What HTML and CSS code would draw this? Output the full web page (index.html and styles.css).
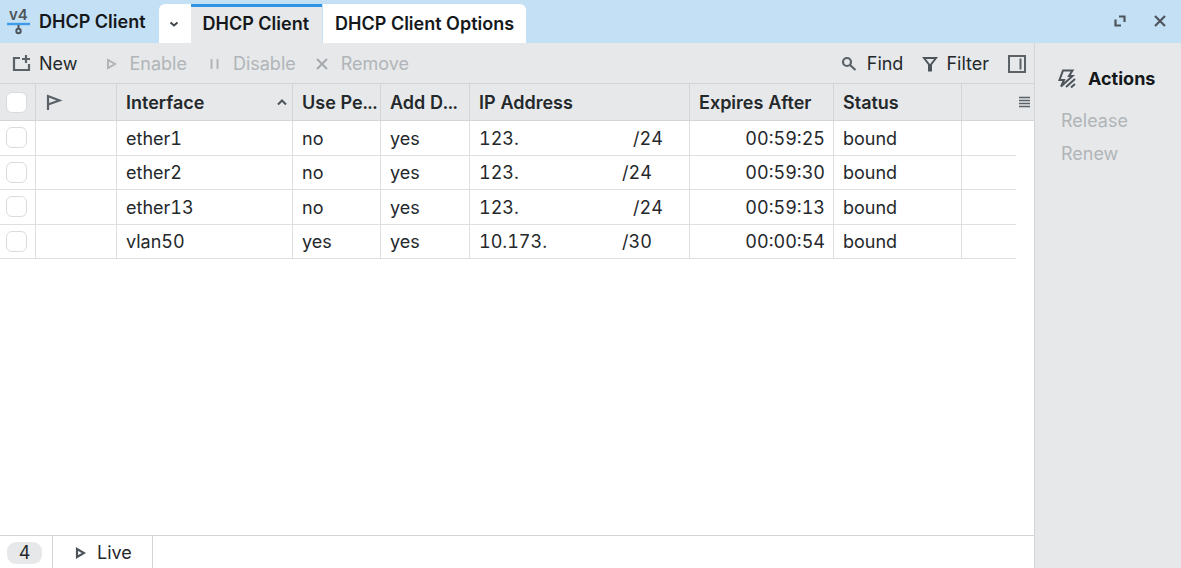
FILE: index.html
```html
<!DOCTYPE html>
<html lang="en">
<head>
    <meta charset="UTF-8">
    <meta name="viewport" content="width=device-width, initial-scale=1.0">
    <title>DHCP Client</title>
    <link rel="stylesheet" href="styles.css">
</head>
<body>
    <!-- Title bar -->
    <header class="titlebar">
        <svg class="logo" width="24" height="34" viewBox="0 0 24 34" fill="none">
            <text x="2" y="15" class="logo-text">v4</text>
            <path d="M0 19h23" stroke="#3d9be9" stroke-width="2.4"/>
            <path d="M11.500 20v4" stroke="#4d555c" stroke-width="2"/>
            <circle cx="11.500" cy="26" r="2.200" stroke="#4d555c" stroke-width="2"/>
        </svg>
        <h1 class="title">DHCP Client</h1>
        <nav class="tabs">
            <button class="tab tab-menu" aria-label="Tabs">
                <svg width="12" height="12" viewBox="0 0 12 12" fill="none" stroke="#3f464c" stroke-width="2"><path d="M2.500 4.500L6 7.500l3.500-3"/></svg>
            </button>
            <button class="tab active">DHCP Client</button>
            <button class="tab">DHCP Client Options</button>
        </nav>
        <div class="window-buttons">
            <button class="icon-button" aria-label="Maximize">
                <svg width="14" height="14" viewBox="0 0 14 14" fill="none" stroke="#4d555c" stroke-width="2.200"><path d="M6 2.500h5.500V8M2.500 5.500v6H8"/></svg>
            </button>
            <button class="icon-button" aria-label="Close">
                <svg width="14" height="14" viewBox="0 0 14 14" fill="none" stroke="#4d555c" stroke-width="2.200"><path d="M2 2l10 10M12 2L2 12"/></svg>
            </button>
        </div>
    </header>

    <div class="content">
        <main class="main">
            <!-- Toolbar -->
            <div class="toolbar">
                <button class="tool">
                    <svg width="20" height="20" viewBox="0 0 20 20" fill="none" stroke="#5a6268" stroke-width="2.200"><path d="M9 4H3v12h15v-6M15 1v8M11 5h8"/></svg>
                    New
                </button>
                <button class="tool tool-enable" disabled>
                    <svg width="12" height="14" viewBox="0 0 12 14" fill="none" stroke="#b1b5b8" stroke-width="2"><path d="M3 3v8l7-4z"/></svg>
                    Enable
                </button>
                <button class="tool tool-disable" disabled>
                    <svg width="12" height="14" viewBox="0 0 12 14" fill="none" stroke="#b1b5b8" stroke-width="2"><path d="M2.500 2v10M8.500 2v10"/></svg>
                    Disable
                </button>
                <button class="tool tool-remove" disabled>
                    <svg width="14" height="14" viewBox="0 0 14 14" fill="none" stroke="#a4a9ad" stroke-width="2"><path d="M2 2l10 10M12 2L2 12"/></svg>
                    Remove
                </button>
                <div class="tools-right">
                    <button class="tool tool-find">
                        <svg width="16" height="16" viewBox="0 0 16 16" fill="none" stroke="#5a6268" stroke-width="2.200"><circle cx="6" cy="6" r="4"/><path d="M9 9l5.500 5"/></svg>
                        Find
                    </button>
                    <button class="tool">
                        <svg width="16" height="16" viewBox="0 0 16 16" fill="none" stroke="#4d555c" stroke-width="2"><path d="M2 2h12L9 8.500v6H7v-6z"/></svg>
                        Filter
                    </button>
                    <button class="tool" aria-label="Toggle panel">
                        <svg width="18" height="18" viewBox="0 0 18 18" fill="none" stroke="#5a6268" stroke-width="2"><path d="M1 1h16v16H1z"/><path d="M12.500 3.500v11"/></svg>
                    </button>
                </div>
            </div>

            <!-- Clients table -->
            <table class="grid">
                <colgroup>
                    <col class="col-check">
                    <col class="col-flag">
                    <col class="col-interface">
                    <col class="col-option">
                    <col class="col-add">
                    <col class="col-address">
                    <col class="col-expires">
                    <col class="col-status">
                    <col>
                    <col class="col-scroll">
                </colgroup>
                <thead>
                    <tr>
                        <th class="check"><input type="checkbox" aria-label="Select all"></th>
                        <th>
                            <svg class="flag" width="18" height="18" viewBox="0 0 18 18" fill="none" stroke="#5a6268" stroke-width="2.200"><path d="M3 16V2l11.500 4.500L3 10.500"/></svg>
                        </th>
                        <th>
                            <div class="sorted">Interface
                                <svg width="12" height="12" viewBox="0 0 12 12" fill="none" stroke="#4d555c" stroke-width="2"><path d="M2 7.500L6 3.500l4 4"/></svg>
                            </div>
                        </th>
                        <th>Use Pe...</th>
                        <th>Add D...</th>
                        <th>IP Address</th>
                        <th>Expires After</th>
                        <th>Status</th>
                        <th class="menu-cell" colspan="2">
                            <button class="icon-button" aria-label="Columns">
                                <svg width="12" height="12" viewBox="0 0 12 12" stroke="#5a6268" stroke-width="1.400"><path d="M0 1.500h11M0 4.500h11M0 7.500h11M0 10.500h11"/></svg>
                            </button>
                        </th>
                    </tr>
                </thead>
                <tbody>
                    <tr>
                        <td class="check"><input type="checkbox" aria-label="ether1"></td>
                        <td></td>
                        <td>ether1</td>
                        <td>no</td>
                        <td>yes</td>
                        <td><span class="ip ip-long">123.</span>/24</td>
                        <td class="time">00:59:25</td>
                        <td>bound</td>
                        <td></td>
                    </tr>
                    <tr>
                        <td class="check"><input type="checkbox" aria-label="ether2"></td>
                        <td></td>
                        <td>ether2</td>
                        <td>no</td>
                        <td>yes</td>
                        <td><span class="ip">123.</span>/24</td>
                        <td class="time">00:59:30</td>
                        <td>bound</td>
                        <td></td>
                    </tr>
                    <tr>
                        <td class="check"><input type="checkbox" aria-label="ether13"></td>
                        <td></td>
                        <td>ether13</td>
                        <td>no</td>
                        <td>yes</td>
                        <td><span class="ip ip-long">123.</span>/24</td>
                        <td class="time">00:59:13</td>
                        <td>bound</td>
                        <td></td>
                    </tr>
                    <tr>
                        <td class="check"><input type="checkbox" aria-label="vlan50"></td>
                        <td></td>
                        <td>vlan50</td>
                        <td>yes</td>
                        <td>yes</td>
                        <td><span class="ip">10.173.</span>/30</td>
                        <td class="time">00:00:54</td>
                        <td>bound</td>
                        <td></td>
                    </tr>
                </tbody>
            </table>

            <!-- Status bar -->
            <footer class="statusbar">
                <div class="status-cell"><span class="count">4</span></div>
                <button class="status-cell live">
                    <svg width="12" height="14" viewBox="0 0 12 14" fill="none" stroke="#4d555c" stroke-width="2.200"><path d="M3 3v8l7-4z"/></svg>
                    Live
                </button>
            </footer>
        </main>

        <!-- Actions panel -->
        <aside class="actions">
            <h2 class="actions-title">
                <svg width="20" height="20" viewBox="0 0 20 20" fill="none" stroke="#4d555c" stroke-width="2"><path d="M6 1.500h9.500L12 7h3.500L4 17.500 7 11H2.500z"/><path d="M18 10l-9 8M18 15l-4 3.500"/></svg>
                Actions
            </h2>
            <button class="action" disabled>Release</button>
            <button class="action" disabled>Renew</button>
        </aside>
    </div>
</body>
</html>
```

FILE: styles.css
```css
* {
    box-sizing: border-box;
}

body {
    margin: 0;
    height: 100vh;
    display: flex;
    flex-direction: column;
    font-family: Inter, sans-serif;
    font-size: 18px;
    line-height: 24px;
    color: #24282b;
    background: #ffffff;
}

button {
    padding: 0;
    border: none;
    background: none;
    font: inherit;
    color: inherit;
}

svg {
    display: block;
    flex-shrink: 0;
}

/* Title bar */
.titlebar {
    display: flex;
    align-items: center;
    height: 43px;
    padding-left: 7px;
    background: #c4e0f4;
}

.logo-text {
    font-size: 15px;
    font-weight: 600;
    fill: #4d555c;
}

.title {
    margin: 0 13px 0 8px;
    font-size: 18px;
    font-weight: 600;
    color: #14181b;
}

.tabs {
    display: flex;
    align-self: flex-end;
    height: 39px;
}

.tab {
    padding: 0 12px;
    background: #ffffff;
    font-weight: 600;
    color: #14181b;
}

.tab:last-child {
    margin-left: 1px;
    border-top-right-radius: 6px;
}

.tab-menu {
    width: 32px;
    padding: 0 9px;
    border-top-left-radius: 6px;
}

.tab.active {
    border-top: 3px solid #2e94e6;
    padding: 0 13px 3px 12px;
    background: #e6e8ea;
}

.window-buttons {
    display: flex;
    gap: 26px;
    margin-left: auto;
    padding: 0 14px 2px 0;
}

.content {
    flex: 1;
    display: flex;
    min-height: 0;
}

.main {
    flex: 1;
    display: flex;
    flex-direction: column;
    min-width: 0;
}

/* Toolbar */
.toolbar {
    display: flex;
    align-items: center;
    height: 40px;
    padding: 2px 8px 0 11px;
    background: #e6e8ea;
}

.tool {
    display: flex;
    align-items: center;
    gap: 8px;
}

.tool:disabled {
    color: #b1b5b8;
}

.tool-enable {
    gap: 12px;
    margin-left: 28px;
}

.tool-disable {
    gap: 12px;
    margin-left: 22px;
}

.tool-remove {
    gap: 12px;
    margin-left: 19px;
}

.tool-find {
    gap: 10px;
}

.tools-right {
    display: flex;
    gap: 19px;
    margin-left: auto;
}

/* Table */
.grid {
    width: 100%;
    table-layout: fixed;
    border-collapse: separate;
    border-spacing: 0;
    font-variant-numeric: tabular-nums;
}

.grid tbody {
    height: 138px;
}

.col-check {
    width: 36px;
}

.col-flag {
    width: 81px;
}

.col-interface {
    width: 176px;
}

.col-option {
    width: 88px;
}

.col-add {
    width: 89px;
}

.col-address {
    width: 220px;
}

.col-expires {
    width: 144px;
}

.col-status {
    width: 128px;
}

.col-scroll {
    width: 18px;
}

.grid th,
.grid td {
    padding: 2px 0 0 9px;
    text-align: left;
    white-space: nowrap;
    border-right: 1px solid #dde0e2;
    border-bottom: 1px solid #dde0e2;
}

.grid th {
    height: 38px;
    background: #e6e8ea;
    border-top: 1px solid #d3d6d9;
    border-color: #d3d6d9;
    font-weight: 600;
}

.grid th:last-child,
.grid td:last-child {
    border-right: none;
}

.grid .check {
    padding: 0 0 0 6px;
}

.grid .time {
    padding-right: 8px;
    text-align: right;
}

.grid .menu-cell {
    padding: 0 3px 0 0;
}

.menu-cell .icon-button {
    display: block;
    margin-left: auto;
}

.sorted {
    display: flex;
    align-items: center;
    justify-content: space-between;
    padding-right: 4px;
}

.check input {
    appearance: none;
    display: block;
    width: 21px;
    height: 21px;
    margin: 0;
    border: 1px solid #d9dcde;
    border-radius: 6px;
    background: #ffffff;
}

.ip {
    display: inline-block;
    width: 143px;
}

.ip-long {
    width: 154px;
}

/* Status bar */
.statusbar {
    display: flex;
    height: 33px;
    margin-top: auto;
    border-top: 1px solid #d3d6d9;
}

.status-cell {
    display: flex;
    align-items: center;
    padding: 2px 10px 0 7px;
    border-right: 1px solid #d3d6d9;
}

.count {
    width: 35px;
    border-radius: 9px;
    background: #e6e8ea;
    line-height: 22px;
    text-align: center;
}

.live {
    gap: 11px;
    padding: 2px 20px 0 21px;
}

/* Actions panel */
.actions {
    width: 147px;
    padding: 24px 0 0 22px;
    border-left: 1px solid #d3d6d9;
    background: #e6e8ea;
}

.actions-title {
    display: flex;
    align-items: center;
    gap: 11px;
    margin: 0 0 18px;
    font-size: 18px;
    font-weight: 700;
    color: #14181b;
}

.action {
    display: block;
    margin: 0 0 9px 4px;
}

.action:disabled {
    color: #b1b5b8;
}
```
